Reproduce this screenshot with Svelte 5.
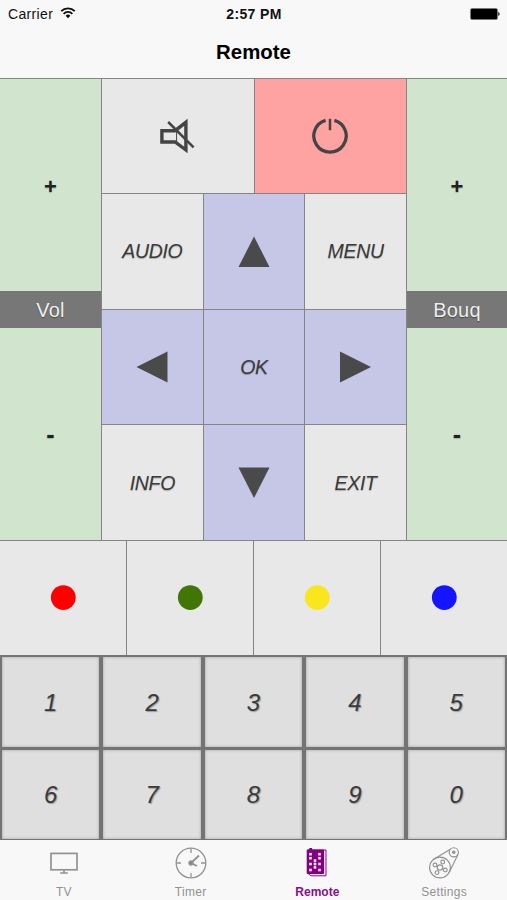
<script>
    let active = $state('Remote')

    let colors = [{name:'red', fill:'#ff0000'}, {name:'green', fill:'#417505'}, {name:'yellow', fill:'#f8e71c'}, {name:'blue', fill:'#1414ff'}]
    let digits = [1, 2, 3, 4, 5, 6, 7, 8, 9, 0]
    let sides = ['Vol', 'Bouq']
    let tabs = ['TV', 'Timer', 'Remote', 'Settings']

    // pips on the remote icon
    let pips = [[9.5,7.2],[18.5,7.2],[9.5,11.2],[18.5,11.2],[14,13.6],[9.5,17],[14,17],[18.5,17],[14,20.4],[9.5,23],[18.5,23]]
</script>

{#snippet side(label)}
    <div class="side">
        <button class="step">+</button>
        <div class="side-label">{label}</div>
        <button class="step minus">-</button>
    </div>
{/snippet}

{#snippet arrow(points, label)}
    <button class="key nav" aria-label={label}>
        <svg width="32" height="32" viewBox="0 0 32 32"><polygon {points} fill="#4a4a4a" /></svg>
    </button>
{/snippet}

<div class="screen">
    <header>
        <div class="status">
            <div class="carrier">
                <span>Carrier</span>
                <svg width="16" height="12" viewBox="0 0 16 12" fill="none" stroke="#111" stroke-width="1.8">
                    <path d="M1.2 4.2 A9.6 9.6 0 0 1 14.8 4.2" />
                    <path d="M3.6 6.8 A6.2 6.2 0 0 1 12.4 6.8" />
                    <path d="M8 11.2 L5.6 8.8 A3.4 3.4 0 0 1 10.4 8.8 Z" fill="#111" stroke="none" />
                </svg>
            </div>
            <b>2:57 PM</b>
            <div class="battery">
                <svg width="31" height="12" viewBox="0 0 31 12">
                    <rect x="1.5" y="0.5" width="27" height="11" rx="1.5" fill="#000" stroke="#777" stroke-width="0.6" />
                    <path d="M29.2 4 Q30.7 4.6 30.7 6 Q30.7 7.4 29.2 8 Z" fill="#222" />
                </svg>
            </div>
        </div>
        <h1>Remote</h1>
    </header>

    <section class="controls">
        {@render side(sides[0])}
        <div class="center">
            <div class="top">
                <button class="key" aria-label="Mute">
                    <svg width="36" height="36" viewBox="1.4 0 36 36" fill="none" stroke="#444">
                        <path d="M3.3 12.7 H16.5 L27.3 4.3 V32 L16.5 24 H3.3 Z" stroke-width="3.4" />
                        <path d="M18 13 V24" stroke-width="1" />
                        <path d="M9.6 4 L35 29.3" stroke-width="2.5" />
                    </svg>
                </button>
                <button class="key power" aria-label="Power">
                    <svg width="38" height="38" viewBox="0 0 38 38" fill="none" stroke="#444">
                        <path d="M14.6 3.3 A16.2 16.2 0 1 0 23.4 3.3" stroke-width="3.3" />
                        <path d="M19 1.8 V13.2" stroke-width="2.5" />
                    </svg>
                </button>
            </div>
            <div class="pad">
                <button class="key">AUDIO</button>
                {@render arrow('16,0.5 31.5,31 0.5,31', 'Up')}
                <button class="key">MENU</button>
                {@render arrow('0.5,16 31.5,0.5 31.5,31.5', 'Left')}
                <button class="key nav">OK</button>
                {@render arrow('31,16 0,0.5 0,31.5', 'Right')}
                <button class="key">INFO</button>
                {@render arrow('0.5,0.5 31.5,0.5 16,31', 'Down')}
                <button class="key">EXIT</button>
            </div>
        </div>
        {@render side(sides[1])}
    </section>

    <section class="colors">
        {#each colors as color}
            <button class="key" aria-label={color.name}>
                <svg width="26" height="26" viewBox="0 0 26 26"><circle cx="13.3" cy="12.6" r="12.4" fill={color.fill} /></svg>
            </button>
        {/each}
    </section>

    <section class="digits">
        {#each digits as digit}
            <button class="digit">{digit}</button>
        {/each}
    </section>

    <nav>
        {#each tabs as tab}
            <button class="tab {active === tab ? 'active':''}" onclick={() => active = tab}>
                <svg width="32" height="32" viewBox="0 0 32 32" fill="none" stroke="#929292" stroke-width="1.3">
                    {#if tab === 'TV'}
                        <rect x="3" y="6.4" width="26" height="16.4" stroke-width="1.7" />
                        <path d="M16 23.5 V26 M12.2 26 H19.8" stroke-width="1.7" />
                    {:else if tab === 'Timer'}
                        <circle cx="16" cy="16" r="14.8" />
                        <path d="M16 1.5 V6 M16 26 V30.5 M1.5 16 H6 M26 16 H30.5" />
                        <path d="M16 16 L24 8.5 M16 16 L22 19" stroke-width="1.9" />
                        <circle cx="16" cy="16" r="2" fill="#888" />
                    {:else if tab === 'Remote'}
                        <path d="M8 3 H25 V28.8 H10 L6.5 26 V3 Z" fill="#f4e4f4" stroke="#85108a" stroke-width="1" />
                        <rect x="5.7" y="2.5" width="17.4" height="24.5" rx="1" fill="#800080" stroke="none" />
                        <rect x="8.3" y="1" width="2.8" height="2.5" fill="#800080" stroke="none" />
                        {#each pips as [x, y]}
                            <rect x={x - 1.3} y={y - 1.3} width="2.6" height="2.6" fill="#f5e8f5" stroke="none" />
                        {/each}
                    {:else}
                        <g stroke-width="1.15">
                            <circle cx="12" cy="20.5" r="10.4" />
                            <circle cx="25.8" cy="5.3" r="4.6" />
                            <circle cx="25.8" cy="5.3" r="1.2" fill="#929292" />
                            <path d="M5 12.7 L22.7 1.9 M21.4 25 L30.1 7.2" />
                            <circle cx="12" cy="20.5" r="2.7" />
                            <circle cx="14.7" cy="15" r="1.9" />
                            <circle cx="7" cy="18" r="1.9" />
                            <circle cx="17.3" cy="23" r="1.9" />
                            <circle cx="9" cy="25.6" r="1.9" />
                        </g>
                    {/if}
                </svg>
                <span>{tab}</span>
            </button>
        {/each}
    </nav>
</div>

<style>
    :global(body) {
        background-color: #f8f8f8;
    }

    .screen {
        width: 507px;
        height: 900px;
        display: flex;
        flex-direction: column;
        overflow: hidden;
        font-family: "Liberation Sans", Arial, sans-serif;
        background-color: #f8f8f8;
    }

    button {
        margin: 0;
        padding: 0;
        border: 0;
        background: none;
        font: inherit;
        color: inherit;
        cursor: pointer;
    }

    svg {
        display: block;
        flex-shrink: 0;
    }

    header {
        height: 78px;
        color: #111;
    }

    .status {
        height: 28px;
        display: grid;
        grid-template-columns: 1fr auto 1fr;
        align-items: center;
        padding: 0 7px 0 8px;
        font-size: 14px;
        letter-spacing: 0.35px;
    }

    .carrier {
        display: flex;
        align-items: center;
        gap: 7px;
    }

    .carrier svg {
        margin-top: -2px;
    }

    .battery {
        display: flex;
        justify-content: flex-end;
    }

    h1 {
        margin: 0;
        line-height: 49px;
        font-size: 20.4px;
        font-weight: bold;
        text-align: center;
        color: #000;
    }

    .controls {
        height: 461px;
        display: grid;
        grid-template-columns: 101px 304px 100px;
        gap: 1px;
        padding: 1px 0;
        background-color: #858585;
    }

    .side {
        display: grid;
        grid-template-rows: 212px 37px 212px;
        background-color: #d0e4ce;
    }

    .step {
        padding-top: 3px;
        font-size: 22px;
        font-weight: bold;
        color: #222;
        text-shadow: 0 1px 1px rgba(0, 0, 0, 0.2);
    }

    .minus {
        padding-top: 0;
        font-size: 25px;
    }

    .side-label {
        display: flex;
        align-items: center;
        justify-content: center;
        padding-top: 1px;
        background-color: #777;
        color: #eee;
        font-size: 20px;
        letter-spacing: 0.2px;
        text-shadow: 0 1px 1px rgba(0, 0, 0, 0.4);
    }

    .center {
        display: grid;
        grid-template-rows: 114px 346px;
        gap: 1px;
    }

    .top {
        display: grid;
        grid-template-columns: 1fr 1fr;
        gap: 1px;
    }

    .pad {
        display: grid;
        grid-template-columns: 1fr 1fr 1fr;
        grid-template-rows: 1fr 1fr 1fr;
        gap: 1px;
    }

    .key {
        display: flex;
        align-items: center;
        justify-content: center;
        background-color: #e8e8e8;
        color: #3b3b3b;
        font-size: 19.5px;
        font-style: italic;
        letter-spacing: -0.3px;
        text-shadow: 0 1px 1px rgba(0, 0, 0, 0.25);
    }

    .pad .key {
        padding-top: 1px;
    }

    .nav {
        background-color: #c6c6e6;
    }

    .power {
        background-color: #ffa2a2;
    }

    .colors {
        height: 114px;
        display: grid;
        grid-template-columns: repeat(4, 1fr);
        gap: 1px;
        background-color: #858585;
    }

    .digits {
        height: 182px;
        display: grid;
        grid-template-columns: repeat(5, 1fr);
        grid-template-rows: 1fr 1fr;
        gap: 3px 4px;
        padding: 2px 2px 1px;
        background-color: #747474;
    }

    .digit {
        padding-top: 2px;
        background-color: #dfdfdf;
        box-shadow: inset 0 0 3px rgba(0, 0, 0, 0.3);
        color: #3b3b3b;
        font-size: 24px;
        font-style: italic;
        text-shadow: 1px 1px 1px rgba(0, 0, 0, 0.3);
    }

    nav {
        height: 60px;
        display: grid;
        grid-template-columns: repeat(4, 1fr);
    }

    .tab {
        display: flex;
        flex-direction: column;
        align-items: center;
        padding: 7px 0 0 1px;
        color: #929292;
        font-size: 12px;
        letter-spacing: 0.3px;
    }

    .tab span {
        margin-top: 6px;
        line-height: 14px;
    }

    .tab.active {
        color: #85108a;
        font-weight: bold;
        letter-spacing: 0;
    }
</style>
